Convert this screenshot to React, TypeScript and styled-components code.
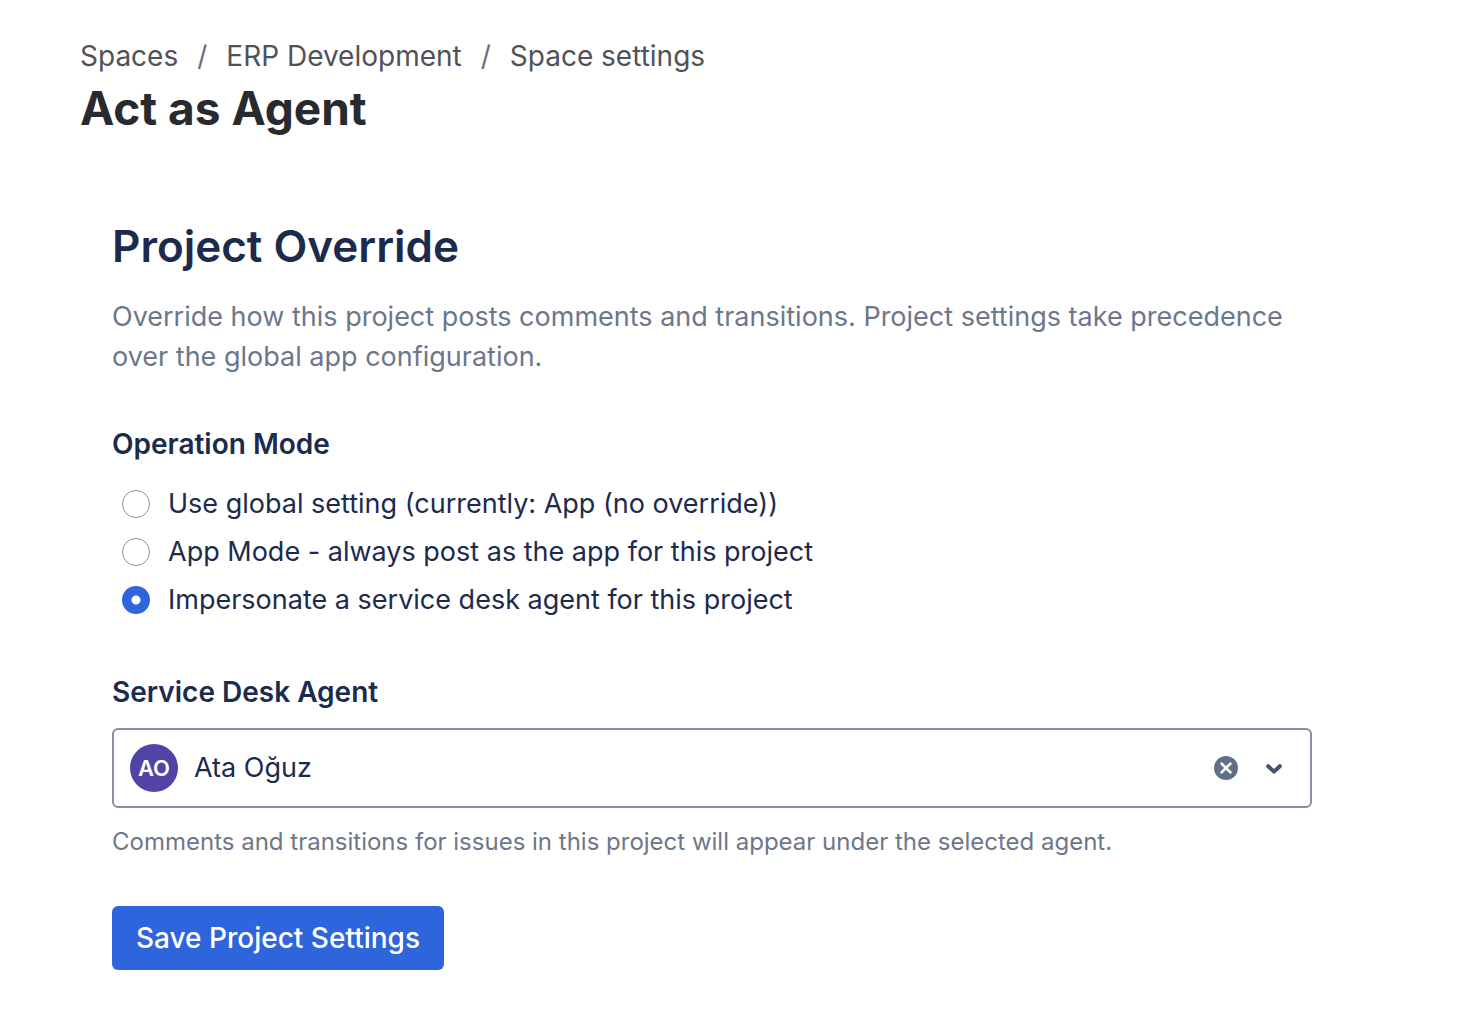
import React, { useState } from "react";
import styled, { createGlobalStyle } from "styled-components";

const GlobalStyle = createGlobalStyle`
  *, *::before, *::after { box-sizing: border-box; }
  body {
    margin: 0;
    background: #fff;
    color: #1c2b4d;
    font-family: Inter, "Liberation Sans", sans-serif;
    font-size: 28px;
    line-height: 40px;
  }
`;

const Page = styled.main`
  padding: 36px 80px 46px;
`;

const Crumbs = styled.ol`
  display: flex;
  list-style: none;
  margin: 0;
  padding: 0;
  color: #505258;
`;

const Crumb = styled.li`
  & + &::before {
    content: "/";
    margin: 0 19px;
    color: #6b6e76;
  }
`;

const CrumbLink = styled.a`
  color: inherit;
  text-decoration: none;
  &:hover { text-decoration: underline; }
`;

const PageTitle = styled.h1`
  margin: 4px 0 0;
  color: #292a2e;
  font-size: 46px;
  font-weight: 700;
  line-height: 56px;
`;

const Panel = styled.form`
  max-width: 1264px;
  padding: 82px 32px 0;
`;

const PanelTitle = styled.h2`
  margin: 0 0 23px;
  font-size: 44px;
  font-weight: 600;
  line-height: 56px;
`;

const Description = styled.p`
  margin: 0 0 47px;
  color: #6c778b;
  font-size: 27px;
`;

const Modes = styled.fieldset`
  margin: 0 0 48px;
  padding: 0;
  border: 0;
`;

const Legend = styled.legend`
  margin-bottom: 16px;
  padding: 0;
  font-weight: 600;
`;

const Mode = styled.label`
  display: flex;
  align-items: center;
  gap: 18px;
  height: 48px;
  padding-left: 10px;
  font-size: 27px;
`;

const Radio = styled.input`
  appearance: none;
  flex: none;
  width: 28px;
  height: 28px;
  margin: 0;
  border: 1px solid #8590a2;
  border-radius: 50%;
  background: #fff;
  &:checked {
    border: 0;
    background: radial-gradient(circle, #fff 4px, #2e65dd 5px);
  }
`;

const FieldLabel = styled.label`
  display: block;
  margin-bottom: 16px;
  font-weight: 600;
`;

const Picker = styled.div`
  display: flex;
  align-items: center;
  height: 80px;
  padding: 0 12px 0 16px;
  border: 2px solid #8590a2;
  border-radius: 6px;
`;

const Avatar = styled.span`
  flex: none;
  width: 48px;
  margin-right: 16px;
  border-radius: 50%;
  background: #5144a6;
  color: #fff;
  font-size: 22px;
  font-weight: 600;
  line-height: 48px;
  text-align: center;
`;

const AgentInput = styled.input`
  flex: 1;
  min-width: 0;
  padding: 0;
  border: 0;
  outline: 0;
  background: transparent;
  color: inherit;
  font: inherit;
  font-size: 27px;
`;

const IconButton = styled.button`
  display: flex;
  align-items: center;
  justify-content: center;
  width: 48px;
  height: 48px;
  padding: 0;
  border: 0;
  background: transparent;
`;

const Help = styled.p`
  margin: 18px 0 48px;
  color: #6c778b;
  font-size: 24px;
  line-height: 32px;
`;

const SaveButton = styled.button`
  height: 64px;
  padding: 0 24px;
  border: 0;
  border-radius: 6px;
  background: #2e65dd;
  color: #fff;
  font: inherit;
  font-weight: 500;
`;

const modes = [
  "Use global setting (currently: App (no override))",
  "App Mode - always post as the app for this project",
  "Impersonate a service desk agent for this project",
];

export default function App() {
  const [mode, setMode] = useState(2);
  const [agent, setAgent] = useState("Ata Oğuz");
  return (
    <Page>
      <GlobalStyle />
      <nav aria-label="Breadcrumbs">
        <Crumbs>
          {["Spaces", "ERP Development", "Space settings"].map((name) => (
            <Crumb key={name}>
              <CrumbLink href="#">{name}</CrumbLink>
            </Crumb>
          ))}
        </Crumbs>
      </nav>
      <PageTitle>Act as Agent</PageTitle>
      <Panel onSubmit={(e) => e.preventDefault()}>
        <PanelTitle>Project Override</PanelTitle>
        <Description>
          Override how this project posts comments and transitions. Project settings take precedence
          over the global app configuration.
        </Description>
        <Modes>
          <Legend>Operation Mode</Legend>
          {modes.map((text, i) => (
            <Mode key={text}>
              <Radio type="radio" name="mode" checked={mode === i} onChange={() => setMode(i)} />
              {text}
            </Mode>
          ))}
        </Modes>
        <FieldLabel htmlFor="agent">Service Desk Agent</FieldLabel>
        <Picker>
          <Avatar aria-hidden="true">AO</Avatar>
          <AgentInput id="agent" value={agent} onChange={(e) => setAgent(e.target.value)} />
          <IconButton type="button" aria-label="Clear" onClick={() => setAgent("")}>
            <svg width="24" height="24" viewBox="0 0 24 24" fill="none">
              <circle cx="12" cy="12" r="12" fill="#626f86" />
              <path d="M7.6 7.6l8.8 8.8M16.4 7.6l-8.8 8.8" stroke="#fff" strokeWidth="2.7" strokeLinecap="round" />
            </svg>
          </IconButton>
          <IconButton type="button" aria-label="Open">
            <svg width="24" height="24" viewBox="0 0 24 24" fill="none">
              <path d="M6.2 10.2l5.8 5.4 5.8-5.4" stroke="#44546f" strokeWidth="4" strokeLinecap="round" strokeLinejoin="round" />
            </svg>
          </IconButton>
        </Picker>
        <Help>Comments and transitions for issues in this project will appear under the selected agent.</Help>
        <SaveButton type="submit">Save Project Settings</SaveButton>
      </Panel>
    </Page>
  );
}
